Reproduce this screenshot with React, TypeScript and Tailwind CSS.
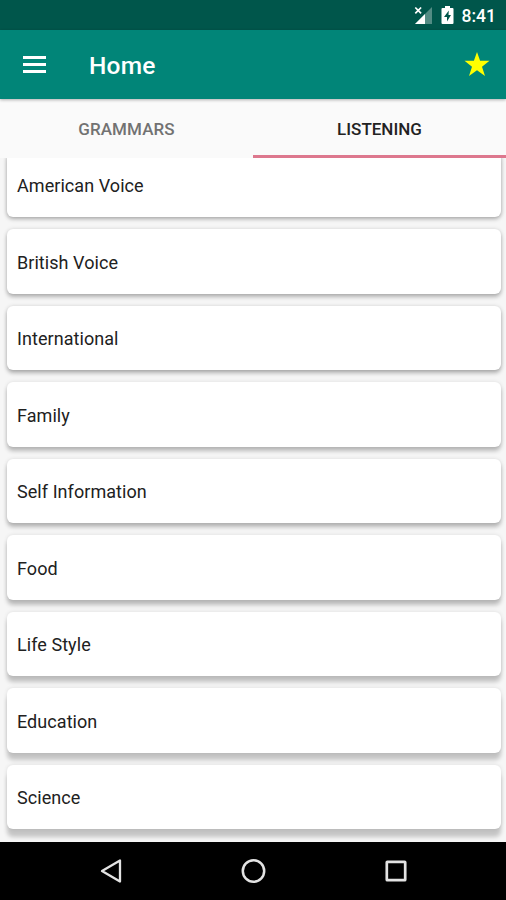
const cards = [
  { label: 'American Voice', shadow: 'shadow-[0_2px_4px_rgba(0,0,0,0.28),0_0_4px_rgba(0,0,0,0.12)]' },
  { label: 'British Voice', shadow: 'shadow-[0_3px_4px_rgba(0,0,0,0.26),0_0_4px_rgba(0,0,0,0.12)]' },
  { label: 'International', shadow: 'shadow-[0_3px_4px_rgba(0,0,0,0.28),0_0_4px_rgba(0,0,0,0.12)]' },
  { label: 'Family', shadow: 'shadow-[0_4px_4px_rgba(0,0,0,0.24),0_0_4px_rgba(0,0,0,0.1)]' },
  { label: 'Self Information', shadow: 'shadow-[0_4px_4px_rgba(0,0,0,0.25),0_0_4px_rgba(0,0,0,0.1)]' },
  { label: 'Food', shadow: 'shadow-[0_5px_4px_rgba(0,0,0,0.23),0_0_4px_rgba(0,0,0,0.1)]' },
  { label: 'Life Style', shadow: 'shadow-[0_6px_4px_rgba(0,0,0,0.21),0_0_4px_rgba(0,0,0,0.1)]' },
  { label: 'Education', shadow: 'shadow-[0_7px_4px_rgba(0,0,0,0.2),0_0_4px_rgba(0,0,0,0.1)]' },
  { label: 'Science', shadow: 'shadow-[0_8px_4px_rgba(0,0,0,0.2),0_0_4px_rgba(0,0,0,0.1)]' },
];

function StatusBar() {
  return (
    <div className="flex h-[30px] shrink-0 items-center justify-end bg-[#00564b] pr-[10px] text-white">
      <svg className="mr-[8px] h-[20px] w-[19px]" viewBox="0 0 19 20">
        <path d="M18 2V19H1Z" fill="#fff" opacity=".32" />
        <path d="M11 9V19H1Z" fill="#fff" />
        <path d="M1.300 2.500l5.800 5.800M7.100 2.500L1.300 8.300" stroke="#fff" strokeWidth="1.700" />
      </svg>
      <svg className="mr-[8px] h-[20px] w-[13px]" viewBox="0 0 13 20">
        <path d="M4 1h5v2h2.500q1 0 1 1v14q0 1-1 1H1.500q-1 0-1-1V4q0-1 1-1H4Z" fill="#fff" />
        <path d="M7.800 5.500L3 12h3v4.500L10 10H7.500Z" fill="#00564b" />
      </svg>
      <span className="pt-[2px] text-[17.500px] leading-[28px] font-medium">8:41</span>
    </div>
  );
}

function AppBar() {
  return (
    <header className="relative z-10 flex h-[69px] shrink-0 items-center bg-[#018578] pr-[16px] pl-[23px] shadow-[0_1px_3px_rgba(0,0,0,0.3)]">
      <svg className="h-[17px] w-[23px]" viewBox="0 0 23 17" fill="#fff">
        <path d="M0 0h23v3H0zM0 7h23v3H0zM0 14h23v3H0z" />
      </svg>
      <h1 className="ml-[43px] flex-1 pt-[2px] text-[24.5px] leading-[30px] font-medium tracking-[0.2px] text-white">Home</h1>
      <svg className="h-[25px] w-[26px]" viewBox="0 0 26 25">
        <path d="M13 0l3.100 8.700H25.500l-7.500 6 3 9.200-8-5.700-8 5.700L8 14.700 .5 8.700h9.400Z" fill="#ffff00" />
      </svg>
    </header>
  );
}

export default function App() {
  return (
    <div className="flex h-[900px] w-[506px] flex-col overflow-hidden bg-[#fafafa] font-[Roboto,sans-serif]">
      <StatusBar />
      <AppBar />
      <nav className="grid h-[59px] shrink-0 grid-cols-2 bg-[#fafafa] text-center text-[17px] font-medium">
        <div className="h-[59px] leading-[60px] tracking-[0.1px] text-[#727272]">GRAMMARS</div>
        <div className="h-[59px] border-b-[3px] border-[#dd788e] leading-[60px] text-[#222]">LISTENING</div>
      </nav>
      <main className="flex min-h-0 flex-1 flex-col overflow-hidden bg-[#f6f6f6] pr-[5px] pl-[7px]">
        <div className="-mt-[5px] flex flex-col gap-[12px]">
          {cards.map(({ label, shadow }) => (
            <div
              key={label}
              className={`relative flex h-[64.45px] shrink-0 items-center rounded-[6px] bg-white pt-[1.5px] pl-[10px] text-[18px] tracking-[0.06px] text-[#212121] ${shadow}`}
            >
              {label}
            </div>
          ))}
        </div>
      </main>
      <footer className="flex h-[58px] shrink-0 items-center justify-between bg-black pr-[99px] pl-[99px]">
        <svg className="h-[26px] w-[24px]" viewBox="0 0 24 26" fill="none" stroke="#e3e3e3" strokeWidth="2.300">
          <path d="M21 2.500v21L3 13Z" strokeLinejoin="round" />
        </svg>
        <svg className="h-[26px] w-[26px]" viewBox="0 0 26 26" fill="none" stroke="#e3e3e3" strokeWidth="2.500">
          <circle cx="12.500" cy="13" r="10.700" />
        </svg>
        <svg className="h-[22px] w-[22px]" viewBox="0 0 22 22" fill="none" stroke="#e3e3e3" strokeWidth="2.700">
          <rect x="1.800" y="1.800" width="18.400" height="18.400" rx=".5" />
        </svg>
      </footer>
    </div>
  );
}
